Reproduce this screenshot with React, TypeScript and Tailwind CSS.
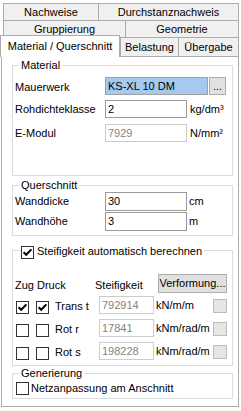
import React from "react";

const Check = ({ checked }: { checked?: boolean }) => (
  <div className="w-[13px] h-[13px] border border-[#333333] bg-white flex items-center justify-center shrink-0">
    {checked && (
      <svg width="11" height="11" viewBox="0 0 11 11">
        <path d="M1.6 5.2 L4.2 7.8 L9.4 2.4" stroke="#000" strokeWidth="2" fill="none" />
      </svg>
    )}
  </div>
);

const Tab = ({ w, h, label, extra }: { w: string; h: string; label: string; extra?: string }) => (
  <div
    className={`${w} ${h} ${extra ?? ""} border border-b-0 border-[#acacac] bg-[#f0f0f0] flex items-center justify-center whitespace-nowrap`}
  >
    {label}
  </div>
);

const Row = ({
  label,
  value,
  unit,
  disabled,
  mt,
  h,
  unitMl,
}: {
  label: string;
  value: string;
  unit: string;
  disabled?: boolean;
  mt: string;
  h: string;
  unitMl: string;
}) => (
  <div className={`${mt} ${h} flex items-center`}>
    <div className="w-[92px] pl-[2px] whitespace-nowrap">{label}</div>
    <div
      className={`w-[82px] ${h} border ${
        disabled ? "border-[#cccccc] text-[#838383]" : "border-[#9a9a9a]"
      } bg-white pl-[2px] flex items-center`}
    >
      {value}
    </div>
    <div className={`${unitMl} whitespace-nowrap`}>{unit}</div>
  </div>
);

const StiffRow = ({
  mt,
  zug,
  druck,
  label,
  value,
  unit,
}: {
  mt: string;
  zug?: boolean;
  druck?: boolean;
  label: string;
  value: string;
  unit: string;
}) => (
  <div className={`${mt} h-[18px] flex items-start`}>
    <div className="ml-[3px] mt-[5px]">
      <Check checked={zug} />
    </div>
    <div className="ml-[7px] mt-[5px]">
      <Check checked={druck} />
    </div>
    <div className="ml-[6px] w-[44px] h-[18px] flex items-center pt-[3px] whitespace-nowrap">{label}</div>
    <div className="w-[55px] h-[18px] border border-[#cccccc] text-[#838383] bg-white pl-[2px] flex items-center">
      {value}
    </div>
    <div className="ml-[2px] w-[57px] h-[18px] flex items-center whitespace-nowrap">{unit}</div>
    <div className="mt-[3px] w-[14px] h-[14px] border border-[#bcbcbc] bg-[#e6e6e6]" />
  </div>
);

export default function App() {
  return (
    <div className="w-[241px] h-[411px] bg-white text-black text-[11px] leading-[13px] font-['Liberation_Sans',Arial,sans-serif] overflow-hidden">
      {/* Tab headers */}
      <div className="pt-[3px] pl-[3px] flex">
        <Tab w="w-[96px]" h="h-[17px]" label="Nachweise" />
        <Tab w="w-[141px]" h="h-[17px]" label="Durchstanznachweis" extra="-ml-px" />
      </div>
      <div className="pl-[3px] flex">
        <Tab w="w-[123px]" h="h-[17px]" label="Gruppierung" />
        <Tab w="w-[114px]" h="h-[17px]" label="Geometrie" extra="-ml-px" />
      </div>
      <div className="flex items-end h-[19px]">
        <div className="relative z-10 -mb-px w-[120px] h-[22px] border border-b-0 border-[#acacac] bg-white flex items-center justify-center whitespace-nowrap">
          Material / Querschnitt
        </div>
        <Tab w="w-[59px]" h="h-[19px]" label="Belastung" />
        <Tab w="w-[61px]" h="h-[19px]" label="Übergabe" extra="-ml-px" />
      </div>

      {/* Tab page */}
      <div className="ml-px w-[238px] border border-[#acacac] bg-white pb-[7px]">
        {/* Material */}
        <fieldset className="ml-[10px] w-[221px] mt-[2px] border border-[#dcdcdc] pb-[33px]">
          <legend className="ml-[6px] px-[2px] leading-[13px]">Material</legend>
          <div className="mt-[5px] h-[18px] flex items-center">
            <div className="w-[92px] pl-[2px] pt-[3px] whitespace-nowrap">Mauerwerk</div>
            <div className="w-[103px] h-[18px] border border-[#a0a0a0] bg-[#a6c9f0] pl-[2px] flex items-center whitespace-nowrap">
              KS-XL 10 DM
            </div>
            <div className="ml-px w-[17px] h-[18px] border border-[#adadad] bg-[#e1e1e1] flex items-center justify-center">
              ...
            </div>
          </div>
          <Row label="Rohdichteklasse" value="2" unit="kg/dm³" mt="mt-[5px]" h="h-[18px]" unitMl="ml-[3px]" />
          <Row label="E-Modul" value="7929" unit="N/mm²" disabled mt="mt-[6px]" h="h-[18px]" unitMl="ml-[3px]" />
        </fieldset>

        {/* Querschnitt */}
        <fieldset className="ml-[10px] w-[221px] mt-[3px] border border-[#dcdcdc] pb-[4px]">
          <legend className="ml-[6px] px-[2px] leading-[13px]">Querschnitt</legend>
          <Row label="Wanddicke" value="30" unit="cm" mt="mt-0" h="h-[19px]" unitMl="ml-[2px]" />
          <Row label="Wandhöhe" value="3" unit="m" mt="mt-px" h="h-[19px]" unitMl="ml-[2px]" />
        </fieldset>

        {/* Steifigkeit */}
        <fieldset className="ml-[10px] w-[221px] mt-[7px] border border-[#dcdcdc] pb-[5px]">
          <legend className="ml-[8px] pr-[2px] h-[15px] flex items-start">
            <div className="mt-[3px]">
              <Check checked />
            </div>
            <span className="ml-[3px] mt-[2px] whitespace-nowrap">Steifigkeit automatisch berechnen</span>
          </legend>
          <div className="mt-[16px] h-[19px] flex items-center">
            <div className="pl-[2px] w-[24px] pt-[3px]">Zug</div>
            <div className="w-[58px] pt-[3px]">Druck</div>
            <div className="w-[63px] pt-[3px]">Steifigkeit</div>
            <div className="w-[69px] h-[19px] border border-[#adadad] bg-[#e1e1e1] flex items-center justify-center whitespace-nowrap">
              Verformung...
            </div>
          </div>
          <StiffRow mt="mt-[3px]" zug druck label="Trans t" value="792914" unit="kN/m/m" />
          <StiffRow mt="mt-[5px]" label="Rot r" value="17841" unit="kNm/rad/m" />
          <StiffRow mt="mt-[5px]" label="Rot s" value="198228" unit="kNm/rad/m" />
        </fieldset>

        {/* Generierung */}
        <fieldset className="ml-[10px] w-[221px] mt-px border border-[#dcdcdc] pb-[2px]">
          <legend className="ml-[6px] px-[2px] leading-[13px]">Generierung</legend>
          <div className="mt-px h-[15px] flex items-center">
            <div className="ml-[3px]">
              <Check />
            </div>
            <span className="ml-[2px] whitespace-nowrap">Netzanpassung am Anschnitt</span>
          </div>
        </fieldset>
      </div>
    </div>
  );
}
